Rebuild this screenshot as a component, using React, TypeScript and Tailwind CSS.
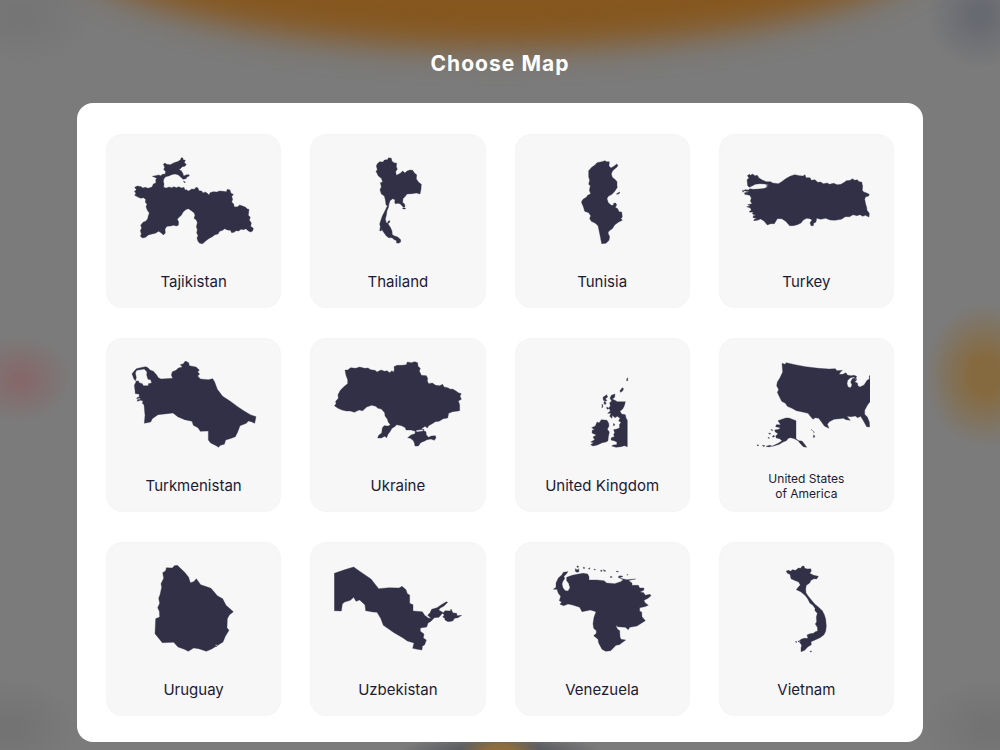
import React from "react";

type Country = {
  name: string;
  path: string;
  small?: boolean;
};

const countries: Country[] = [
  {
    name: "Tajikistan",
    path: "M86 160L94 156L106 158L110 162L118 160L126 163L138 159L142 150L150 146L149 138L152 133L146 130L139 127L148 125L158 123L164 125L171 120L177 121L179 113L173 106L176 100L172 91L177 87L182 91L193 92L204 86L214 83L223 78L226 71L231 72L231 77L238 79L235 86L241 91L237 97L229 98L223 104L219 107L226 110L231 119L233 126L242 122L249 122L250 126L244 128L240 134L231 136L224 129L216 122L206 120L197 122L188 126L179 128L174 134L172 141L174 150L173 160L181 162L189 159L197 161L204 158L211 161L218 158L227 162L234 160L237 168L242 167L246 171L252 169L257 165L265 166L270 160L276 162L279 170L287 171L291 177L298 174L304 178L309 183L312 176L322 173L332 174L341 171L352 172L361 173L364 166L372 168L375 178L382 181L377 188L380 196L377 204L383 210L385 219L395 218L401 213L412 217L419 220L424 225L429 226L428 236L427 244L433 250L430 258L436 267L434 277L442 283L440 291L433 294L426 290L420 284L413 287L405 286L398 291L390 290L384 295L377 296L373 289L364 288L356 284L350 289L341 292L336 300L327 302L319 308L308 314L299 321L290 329L281 328L276 322L273 313L276 304L272 297L274 287L271 278L274 266L271 258L264 253L267 244L264 236L256 230L247 224L239 227L231 235L226 244L219 250L214 256L218 264L217 274L211 276L203 274L194 276L183 277L177 285L178 297L172 303L165 296L158 292L148 298L138 300L127 303L119 310L109 312L103 306L106 300L103 290L107 282L104 274L111 265L120 261L125 254L127 245L130 237L124 229L120 218L123 211L118 205L119 196L112 191L105 193L97 190L86 184L90 177L85 173L91 167ZM232 141L238 144L236 147Z",
  },
  {
    name: "Thailand",
    path: "M202 89L209 83L219 84L223 78L232 77L236 71L244 73L246 82L252 86L260 88L259 98L262 105L257 113L259 124L265 121L271 118L278 111L285 117L291 111L300 108L308 109L314 118L320 122L319 135L326 145L334 151L333 166L330 180L319 177L306 179L291 180L286 187L279 194L278 205L284 211L285 219L280 220L276 215L270 209L262 208L257 210L254 205L255 197L248 194L240 200L237 210L235 221L231 230L229 244L226 255L229 266L232 268L235 261L240 260L239 265L234 269L241 280L246 291L247 302L254 306L263 309L272 317L272 324L265 328L259 326L260 320L253 317L246 311L236 311L229 306L221 295L214 285L214 291L209 290L211 278L209 270L212 260L217 246L225 230L232 216L228 212L226 198L223 186L214 180L210 167L214 158L211 146L218 144L214 133L205 126L198 112L202 107L199 96ZM277 222H286V225H280Z",
  },
  {
    name: "Tunisia",
    path: "M224 110L233 100L242 94L249 86L263 83L273 80L278 83L286 83L285 96L291 102L302 95L308 90L312 94L309 99L302 105L296 110L292 120L295 130L304 137L309 143L309 155L310 160L303 171L294 181L283 187L279 194L283 206L292 214L298 214L299 208L305 207L308 213L304 220L311 224L315 233L323 234L325 248L321 254L325 259L314 264L302 273L295 284L285 291L282 297L287 308L285 319L276 328L263 329L258 304L252 275L244 268L232 262L227 254L230 245L224 236L212 232L208 218L203 207L203 202L208 195L217 190L221 184L230 179L226 169L229 155L224 151L227 138L224 129ZM307 180L316 174L318 176L312 181Z",
  },
  {
    name: "Turkey",
    path: "M87 137L93 132L88 125L94 121L98 124L103 120L111 125L118 124L123 132L133 138L145 143L158 143L164 147L181 149L191 143L203 134L216 127L230 122L245 125L255 126L261 122L264 131L276 131L280 139L291 137L299 145L308 144L316 149L328 147L334 151L347 148L358 152L369 151L379 145L385 140L397 139L402 134L411 139L418 137L423 143L431 144L434 157L433 169L437 174L444 176L454 181L451 187L443 188L440 196L443 210L446 220L447 229L454 238L453 249L442 244L434 247L426 242L417 245L405 242L395 248L382 248L370 256L350 259L336 258L323 253L308 256L296 253L294 264L287 268L286 275L279 275L276 266L282 258L276 254L266 253L256 258L249 267L238 272L226 275L215 275L203 262L191 254L178 254L169 269L158 269L148 273L138 261L128 255L118 259L107 260L109 256L117 253L105 251L106 245L114 244L103 240L106 235L93 234L100 228L97 222L86 218L97 216L89 212L102 209L97 201L100 192L95 184L80 181L80 176L94 173L77 170L81 167L91 168L96 164L104 166L122 165L140 163L150 158L144 156L152 153L140 150L126 149L112 151L104 155L94 160L89 155ZM73 169L78 171L75 175Z",
  },
  {
    name: "Turkmenistan",
    path: "M78 107L84 100L91 92L103 89L119 86L126 89L132 96L142 100L152 111L157 119L165 123L200 121L196 111L199 101L210 97L217 90L229 87L223 80L232 77L238 69L248 74L250 83L270 87L280 96L275 102L281 108L275 114L283 123L307 125L320 122L326 132L334 154L350 175L373 190L395 206L413 218L433 230L450 236L446 256L436 251L427 249L421 256L402 263L395 282L388 296L376 301L359 306L355 319L343 322L338 328L328 322L314 315L307 306L307 279L283 280L276 269L262 262L258 250L236 245L215 236L201 225L183 227L156 230L139 242L134 252L115 256L117 232L114 200L109 196L111 189L104 187L94 190L94 185L103 184L102 180L92 182L93 179L100 176L99 168L88 167L87 157L85 142L91 130L84 124ZM92 97L88 105L91 119L88 128L98 129L99 134L109 137L112 143L127 143L127 137L137 135L134 125L126 124L122 111L123 102L115 93Z",
  },
  {
    name: "Ukraine",
    path: "M105 96L113 96L122 89L137 91L149 87L164 91L174 90L182 95L195 97L201 102L213 96L224 100L231 98L239 104L246 98L250 103L253 95L252 86L261 82L276 82L289 80L292 72L304 74L314 71L323 74L324 85L331 91L328 99L334 112L349 113L353 121L352 129L356 137L367 135L377 142L389 143L398 139L402 147L413 149L422 154L428 153L438 159L445 164L454 167L450 174L454 184L445 189L449 200L449 218L439 220L428 221L416 226L413 240L400 242L387 250L376 251L369 256L356 263L352 270L345 265L335 272L340 278L348 281L349 291L356 298L364 294L376 293L378 299L373 307L363 303L351 305L344 309L332 314L325 324L315 324L313 314L309 307L301 301L293 299L303 291L315 287L316 280L303 276L288 276L286 269L275 263L260 260L254 266L246 271L240 281L234 289L230 299L224 295L214 300L203 300L206 292L215 285L217 270L222 263L235 264L241 260L235 253L232 243L225 234L224 224L214 213L204 211L197 205L185 202L170 207L158 218L147 216L133 223L121 219L109 219L96 216L84 211L73 203L78 198L77 190L85 181L84 170L91 157L103 145L113 137L113 125L108 112ZM318 277L342 274L341 279L320 282Z",
  },
  {
    name: "United Kingdom",
    path: "M292 172L303 168L302 178L295 183L305 188L310 191L334 191L331 203L326 213L318 220L323 228L334 230L336 240L340 247V326L331 323L321 326L306 328L293 324L298 321L308 320L309 313L302 309L291 306L292 299L301 296L299 289L302 284L299 275L309 273L317 269L316 260L321 253L314 249L318 241L310 235L303 239L295 232L294 241L287 235L291 226L281 226L289 219L285 210L289 203L287 194L293 189L288 181ZM249 252L255 255L262 245L272 246L279 247L284 256L285 264L280 274L286 282L283 297L282 308L276 312L265 314L250 321L237 324L230 320L239 314L230 312L242 305L237 297L247 291L234 285L235 276L242 275L233 269L244 264ZM267 178L278 170L281 177L274 182L279 188L271 190L277 195L273 200L269 194L274 189L268 187ZM318 157L322 154L324 149L329 152L325 160L319 163ZM338 123L341 119V128L338 128ZM264 198L267 204L264 210ZM278 207L286 211L279 214ZM299 256L303 261L298 263Z",
  },
  {
    name: "United States of America",
    small: true,
    path: "M192 76L201 79L205 74L231 80L263 86L302 91L333 93L352 92L357 98L373 97L367 103L363 109L374 109L384 104L388 111L398 113L408 112L416 115L414 120L416 126L408 117L398 119L389 127L387 137L390 147L398 149L402 141L398 132L403 122L409 120L415 127L410 132L418 135L420 144L426 147L438 141L448 126L454 124V113H456V191L449 200L440 217L440 229L448 237L454 252L455 267L446 266L437 250L428 235L419 239L412 234L399 236L387 235L391 240L397 247L384 245L376 241L364 242L348 244L334 251L328 259L333 271L319 264L310 251L302 241L292 239L285 244L277 235L270 226L250 221L235 218L222 211L208 205L202 196L191 190L182 172L178 163L182 155L176 143L178 132L186 119L194 102ZM203 240L213 240L234 248V302L242 308L252 309L261 320L266 328L256 326L248 318L240 308L229 302L218 299L211 301L205 308L195 312L184 319L167 324L162 325L182 315L192 308L185 302L175 300L173 294L180 287L172 282L170 276L183 274L187 269L173 266L175 260L188 260L180 248L188 245ZM144 325L155 322L162 324L153 327ZM133 322L141 323L137 326ZM117 320L123 322L118 323ZM280 274L284 279L282 277ZM287 280L289 284L286 282ZM287 290L291 296L286 299ZM152 285L159 287L154 289ZM159 274L165 277L160 277ZM163 295L168 292L170 295L165 298ZM150 298L155 300L151 301Z",
  },
  {
    name: "Uruguay",
    path: "M170 92L179 86L181 77L199 78L205 71L214 70L236 91L248 106L253 122L263 119L271 110L284 128L302 134L315 139L334 161L350 170L360 190L382 209L370 219L364 230L363 257L369 265L358 283L351 300L333 311L317 321L301 328L278 320L263 318L247 328L235 322L216 315L203 301L169 302L147 275L149 230L161 225L160 208L155 197L161 184L158 169L162 158L167 136L165 125L173 109ZM328 308L334 308L331 315Z",
  },
  {
    name: "Uzbekistan",
    path: "M73 94L108 82L131 75L151 89L183 111L206 140L237 137L267 138L276 133L288 143L292 155L299 159V184L309 188V207L337 209L344 220L356 229L363 229L353 220L360 212L365 202L381 197L394 188L409 179L413 181L402 192L391 198L386 204L400 212L405 206L421 207L423 201L429 213L440 214L441 221L455 220L444 227L434 229L428 237L414 239L405 234L404 228L398 225L403 219L397 214L387 226L373 227L363 238L354 243L350 255L331 258L331 268L342 276L340 288L349 294L344 308L337 313L336 324L322 322L308 319L312 303L292 297L278 287L252 272L220 250L212 229L201 211L189 210L167 206L165 189L149 174L138 178L131 166L121 175L104 180L97 186L94 207L73 206Z",
  },
  {
    name: "Venezuela",
    path: "M162 89L155 98L150 103L152 110L147 117L144 126L147 138L154 146L162 147L168 137L164 124L158 116L158 106L175 100L194 96L207 94L221 96L225 104L225 114L249 114L270 116L278 123L302 125L320 119L328 113L318 109L325 110L339 113L365 111L350 114L344 116L354 123L354 130L373 130L377 138L390 138L389 145L378 150L389 152L394 160L408 157L411 161L402 169L390 175L393 182L403 190L392 194L377 197L377 208L383 210L384 224L394 236L382 244L369 252L347 256L343 263L334 256L311 254L305 249L310 261L317 266L318 285L321 292L335 294L323 303L316 308L306 310L290 326L275 328L264 322L254 303L252 292L239 281L247 274L247 266L239 259L237 245L240 226L246 209L229 204L204 209L197 196L176 189L162 186L149 191L138 187L143 180L136 176L140 163L133 154L129 142L118 142L126 136L126 123L133 108L144 98L148 91ZM184 80L190 84L194 80L195 89L189 91L184 88ZM189 72H193V76H189ZM208 75L213 78L209 80ZM223 80L228 77L227 82ZM240 81L245 83L241 84ZM260 84L265 86L261 89ZM268 83L276 87L270 88ZM307 87L314 89L308 90ZM289 103L295 105L290 107ZM312 105L318 101L327 103L316 108ZM339 97L342 98L340 100Z",
  },
  {
    name: "Vietnam",
    path: "M205 87L211 85L219 88L222 83L233 85L241 78L248 79L252 73L258 72L260 79L269 81L278 80L280 87L275 94L287 100L301 103L296 111L288 110L279 115L275 123L265 130L263 141L264 153L272 164L282 176L290 186L302 196L313 206L319 218L323 231L325 252L323 268L318 278L306 287L293 293L279 299L280 308L269 315L260 325L249 329L249 318L251 310L243 298L249 292L258 289L270 289L267 279L276 275L286 274L292 269L299 267L298 256L292 246L296 239L295 225L298 214L291 206L291 199L284 189L276 184L269 170L261 160L248 149L235 143L241 135L247 129L242 120L229 115L219 110L216 97L208 94ZM232 299L236 298L235 302ZM240 297L247 297L247 300L241 299ZM277 327H280V330H277Z",
  },
];

function MapCard({ country }: { country: Country }) {
  return (
    <button
      type="button"
      className="flex h-[174px] flex-col items-center rounded-2xl border border-[#f5f5f5] bg-[#f7f7f7] pt-[22px] text-[#1c1a35]"
    >
      <svg
        viewBox="72 69 384 264"
        className="h-[88px] w-32 fill-[#313047] stroke-[#313047] stroke-1"
        aria-hidden="true"
      >
        <path fillRule="evenodd" d={country.path} />
      </svg>
      <span
        className={
          country.small
            ? "mt-3 flex w-20 flex-1 items-center text-center text-xs leading-[15px]"
            : "mt-3 flex flex-1 items-center text-center text-[15px]"
        }
      >
        {country.name}
      </span>
    </button>
  );
}

function App() {
  return (
    <div className="relative flex min-h-screen flex-col overflow-hidden bg-[#7b7b7b] bg-[radial-gradient(60px_72px_at_98.5%_50%,#866a3f_25%,transparent),radial-gradient(52px_44px_at_2%_50.5%,#85696a_15%,transparent),radial-gradient(54px_54px_at_98%_2%,#686a71_15%,transparent),radial-gradient(80px_50px_at_2%_2%,#757575_15%,transparent),radial-gradient(70px_50px_at_1%_97%,#737373_15%,transparent),radial-gradient(70px_50px_at_99%_97%,#737373_15%,transparent),radial-gradient(40px_16px_at_50%_100%,#8b6d3f_30%,transparent),radial-gradient(100px_16px_at_50%_100%,#5c5d62_40%,transparent)] font-['Inter',sans-serif]">
      {/* glow behind the title */}
      <div className="absolute inset-x-[5%] -top-48 h-60 rounded-[50%] bg-[#86571f] blur-lg" aria-hidden="true" />
      <main className="relative flex flex-col gap-[25px] px-[77px] pt-[50px] pb-2">
        <h1 className="text-center text-[21px] leading-7 font-bold tracking-wider text-white">Choose Map</h1>
        <section
          aria-label="Choose Map"
          className="grid grid-cols-4 gap-x-[29px] gap-y-[30px] rounded-2xl bg-white px-[29px] pt-[31px] pb-[26px]"
        >
          {countries.map((country) => (
            <MapCard key={country.name} country={country} />
          ))}
        </section>
      </main>
    </div>
  );
}

export default App;
